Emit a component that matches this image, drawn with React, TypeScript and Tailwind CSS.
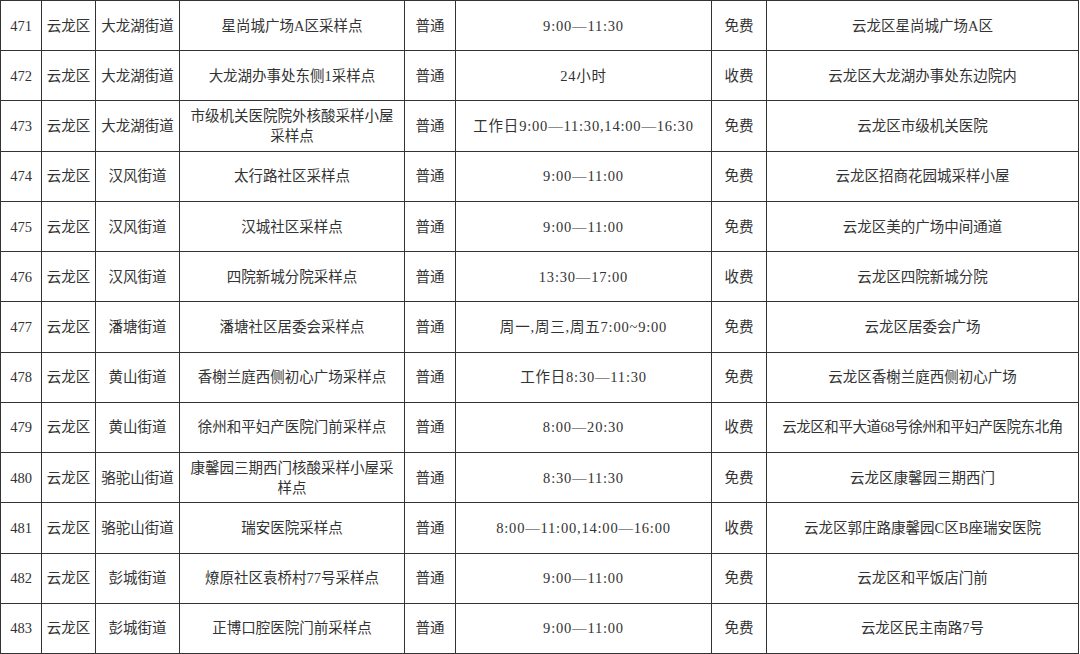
import React from "react";

type Row = {
  no: string;
  area: string;
  street: string;
  site: React.ReactNode;
  kind: string;
  time: string;
  fee: string;
  addr: string;
  addrCls?: string;
};

const rows: Row[] = [
  { no: "471", area: "云龙区", street: "大龙湖街道", site: "星尚城广场A区采样点", kind: "普通", time: "9:00—11:30", fee: "免费", addr: "云龙区星尚城广场A区" },
  { no: "472", area: "云龙区", street: "大龙湖街道", site: "大龙湖办事处东侧1采样点", kind: "普通", time: "24小时", fee: "收费", addr: "云龙区大龙湖办事处东边院内" },
  { no: "473", area: "云龙区", street: "大龙湖街道", site: (<>市级机关医院院外核酸采样小屋<br />采样点</>), kind: "普通", time: "工作日9:00—11:30,14:00—16:30", fee: "免费", addr: "云龙区市级机关医院" },
  { no: "474", area: "云龙区", street: "汉风街道", site: "太行路社区采样点", kind: "普通", time: "9:00—11:00", fee: "免费", addr: "云龙区招商花园城采样小屋" },
  { no: "475", area: "云龙区", street: "汉风街道", site: "汉城社区采样点", kind: "普通", time: "9:00—11:00", fee: "免费", addr: "云龙区美的广场中间通道" },
  { no: "476", area: "云龙区", street: "汉风街道", site: "四院新城分院采样点", kind: "普通", time: "13:30—17:00", fee: "收费", addr: "云龙区四院新城分院" },
  { no: "477", area: "云龙区", street: "潘塘街道", site: "潘塘社区居委会采样点", kind: "普通", time: "周一,周三,周五7:00~9:00", fee: "免费", addr: "云龙区居委会广场" },
  { no: "478", area: "云龙区", street: "黄山街道", site: "香榭兰庭西侧初心广场采样点", kind: "普通", time: "工作日8:30—11:30", fee: "免费", addr: "云龙区香榭兰庭西侧初心广场" },
  { no: "479", area: "云龙区", street: "黄山街道", site: "徐州和平妇产医院门前采样点", kind: "普通", time: "8:00—20:30", fee: "收费", addr: "云龙区和平大道68号徐州和平妇产医院东北角", addrCls: "tracking-[-0.45px]" },
  { no: "480", area: "云龙区", street: "骆驼山街道", site: (<>康馨园三期西门核酸采样小屋采<br />样点</>), kind: "普通", time: "8:30—11:30", fee: "免费", addr: "云龙区康馨园三期西门" },
  { no: "481", area: "云龙区", street: "骆驼山街道", site: "瑞安医院采样点", kind: "普通", time: "8:00—11:00,14:00—16:00", fee: "收费", addr: "云龙区郭庄路康馨园C区B座瑞安医院" },
  { no: "482", area: "云龙区", street: "彭城街道", site: "燎原社区袁桥村77号采样点", kind: "普通", time: "9:00—11:00", fee: "免费", addr: "云龙区和平饭店门前" },
  { no: "483", area: "云龙区", street: "彭城街道", site: "正博口腔医院门前采样点", kind: "普通", time: "9:00—11:00", fee: "免费", addr: "云龙区民主南路7号" },
];

const cell =
  "flex items-center justify-center text-center border-r border-b border-[#333333] whitespace-nowrap overflow-hidden leading-[20px]";

export default function App() {
  return (
    <div lang="zh-CN" className="w-[1080px] h-[654px] bg-white overflow-hidden">
      <div
        className="w-[1079px] h-[654px] grid grid-cols-[41px_54px_84px_225px_51px_256px_55px_312px] grid-rows-[repeat(13,minmax(0,1fr))] border-l border-t border-[#333333] text-[14.5px] text-[#333333]"
        style={{ fontFamily: '"Liberation Serif", "Noto Sans CJK SC", serif' }}
      >
        {rows.map((r) => (
          <React.Fragment key={r.no}>
            <div className={cell}>{r.no}</div>
            <div className={cell}>{r.area}</div>
            <div className={cell}>{r.street}</div>
            <div className={cell}>{r.site}</div>
            <div className={cell}>{r.kind}</div>
            <div className={`${cell} tracking-[0.8px]`}>{r.time}</div>
            <div className={cell}>{r.fee}</div>
            <div className={`${cell} ${r.addrCls ?? ""}`}>{r.addr}</div>
          </React.Fragment>
        ))}
      </div>
    </div>
  );
}
